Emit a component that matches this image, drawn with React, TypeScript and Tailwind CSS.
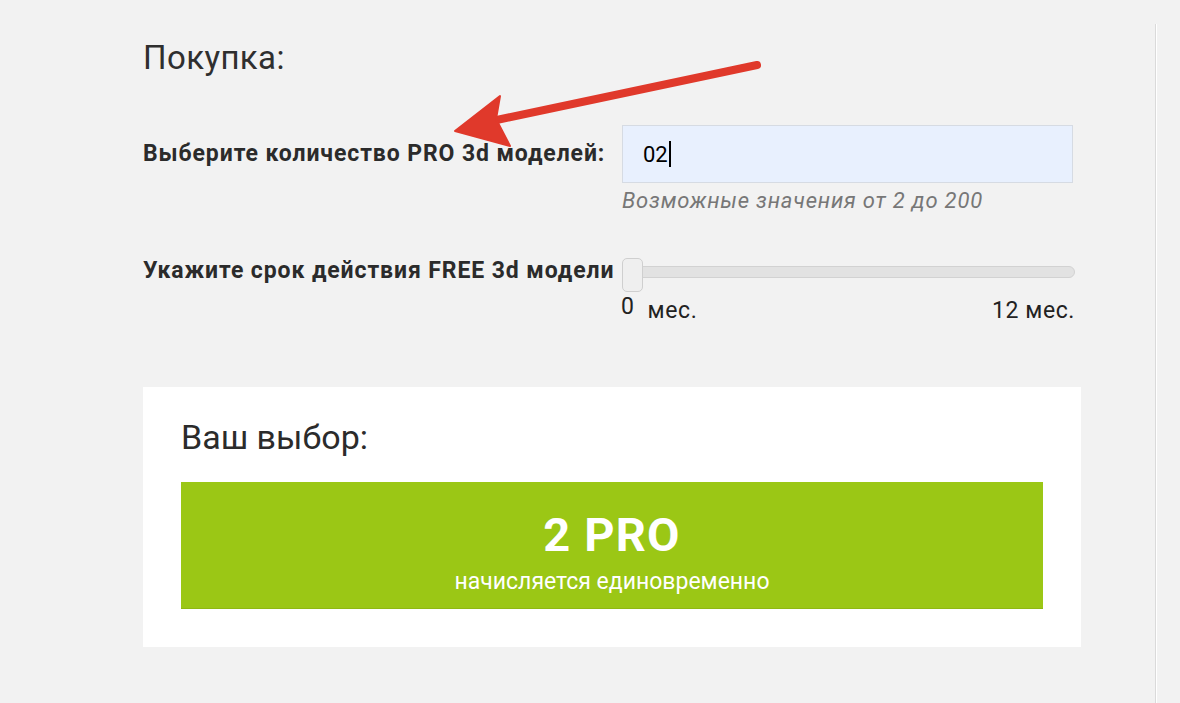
import React from 'react';

export default function App() {
  return (
    <div
      className="relative min-h-[703px] w-[1180px] overflow-hidden bg-[#f2f2f2] text-[#2b2b2b]"
      style={{ fontFamily: 'Roboto, "Liberation Sans", sans-serif' }}
    >
      <div className="pt-[24px]">
        <div className="min-h-[679px] w-[1156px] border-r border-[#dadada] shadow-[1px_0_0_#ffffff]">
          <div className="pl-[143px] pt-[13px]">
            <h1 className="text-[33px] font-normal leading-[42px] tracking-[0.4px] text-[#2f2f2f]">Покупка:</h1>

            <div className="mt-[46px] flex items-center">
              <div className="w-[479px] text-[23px] font-bold leading-[28px] tracking-[0.9px] text-[#2b2b2b]">
                Выберите количество PRO 3d моделей:
              </div>
              <div className="flex h-[58px] w-[451px] items-center border border-[#d6dbe3] bg-[#e8f0fe] pl-[20px] text-[22px] text-black">
                02<span className="ml-[1px] inline-block h-[26px] w-[2px] bg-black" />
              </div>
            </div>
            <div className="ml-[479px] mt-[4px] text-[22px] italic leading-[28px] tracking-[0.8px] text-[#777]">
              Возможные значения от 2 до 200
            </div>

            <div className="mt-[43px] flex items-start">
              <div className="-mt-[1px] w-[479px] text-[23px] font-bold leading-[28px] tracking-[0.9px] text-[#2b2b2b]">
                Укажите срок действия FREE 3d модели
              </div>
              <div className="relative h-[34px] w-[453px]">
                <div className="absolute left-0 right-0 top-[8px] h-[12px] rounded-full border border-[#d2d2d2] bg-[#e2e2e2]" />
                <div className="absolute left-0 top-0 h-[34px] w-[21px] rounded-[5px] border border-[#cfcfcf] bg-[#efefef]" />
              </div>
            </div>
            <div className="ml-[478px] mt-[1px] flex w-[454px] items-start text-[23px] tracking-[0.6px] text-[#222]">
              <span className="leading-[28px]">0</span>
              <span className="ml-[13px] mt-[4px] leading-[28px]">мес.</span>
              <span className="ml-auto mt-[4px] leading-[28px]">12 мес.</span>
            </div>

            <div className="mt-[62px] w-[938px] bg-white px-[38px] pb-[38px] pt-[30px]">
              <div className="text-[34px] leading-[40px] text-[#2b2b2b]">Ваш выбор:</div>
              <div className="mt-[25px] flex h-[127px] flex-col items-center border-b border-[#8fb812] bg-[#9bc715] pt-[26px] text-white">
                <div className="text-[47px] font-bold leading-[54px] tracking-[1.2px]">2 PRO</div>
                <div className="mt-[6px] text-[23px] leading-[28px]">начисляется единовременно</div>
              </div>
            </div>
          </div>
        </div>
      </div>

      {/* red annotation arrow */}
      <svg className="absolute left-0 top-0" width="1180" height="703" viewBox="0 0 1180 703">
        <line x1="757" y1="65" x2="492" y2="121" stroke="#e0392b" strokeWidth="8" strokeLinecap="round" />
        <polygon points="455,131 500,96 496,119 510,146" fill="#e0392b" stroke="#e0392b" strokeWidth="2" strokeLinejoin="round" />
      </svg>
    </div>
  );
}
